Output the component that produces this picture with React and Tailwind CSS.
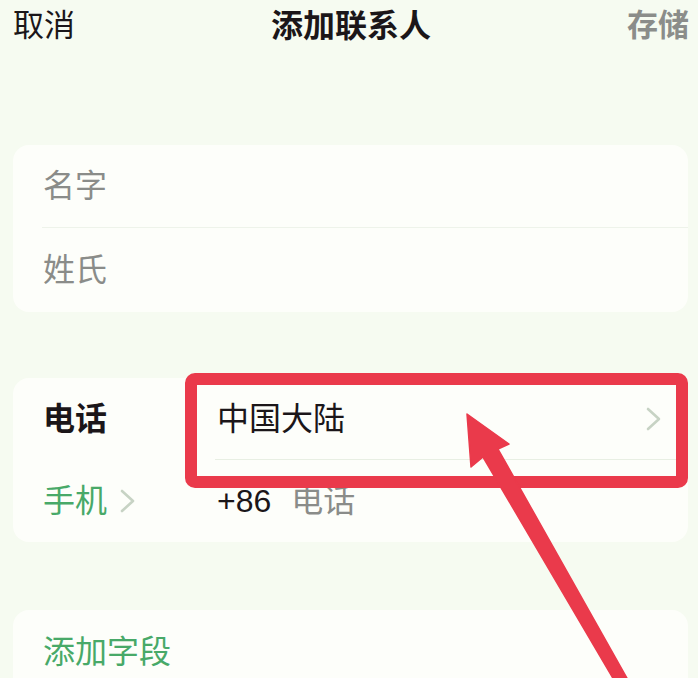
import React from "react";

function Chevron({ className }) {
  return (
    <svg className={className} width="16" height="24" viewBox="0 0 16 24" fill="none">
      <polyline points="2,2 13,12 2,22" stroke="#c7d3c4" strokeWidth="2.6" strokeLinecap="round" strokeLinejoin="round" />
    </svg>
  );
}

export default function App() {
  return (
    <div
      className="relative w-[698px] h-[678px] overflow-hidden bg-[#f6fbf1] text-[#1b1619]"
      style={{ fontFamily: '"Liberation Sans", "Noto Sans CJK SC", sans-serif' }}
    >
      {/* Header */}
      <div className="grid grid-cols-[1fr_auto_1fr] items-center h-[52px] pl-[13px] pr-[9px]">
        <div className="justify-self-start text-[31px] leading-[52px]">取消</div>
        <div className="justify-self-center text-[32px] leading-[52px] font-bold">添加联系人</div>
        <div className="justify-self-end text-[31px] leading-[52px] font-semibold text-[#8b8d8a]">存储</div>
      </div>

      {/* Card 1 */}
      <div className="mt-[93px] ml-[13px] mr-[10px] rounded-[16px] bg-[#fdfefa]">
        <div className="h-[82px] flex items-center pl-[30px] text-[32px] text-[#8a8c89]">名字</div>
        <div className="ml-[29px] h-px bg-[#eef3ea]" />
        <div className="h-[84px] flex items-center pl-[30px] text-[32px] text-[#8a8c89]">姓氏</div>
      </div>

      {/* Card 2 */}
      <div className="mt-[66px] ml-[13px] mr-[10px] rounded-[16px] bg-[#fdfefa]">
        <div className="h-[81px] flex items-center">
          <div className="w-[204px] pl-[30px] text-[32px] font-bold">电话</div>
          <div className="flex-1 flex items-center justify-between pr-[26px]">
            <span className="text-[32px]">中国大陆</span>
            <Chevron />
          </div>
        </div>
        <div className="ml-[202px] h-px bg-[#e8efe3]" />
        <div className="h-[82px] flex items-center">
          <div className="w-[204px] pl-[30px] flex items-center text-[32px] text-[#48a968]">
            <span>手机</span>
            <Chevron className="ml-[13px]" />
          </div>
          <div className="flex items-center text-[32px]">
            <span>+86</span>
            <span className="ml-[20px] text-[#8a8c89]">电话</span>
          </div>
        </div>
      </div>

      {/* Card 3 */}
      <div className="mt-[68px] ml-[13px] mr-[10px] rounded-[16px] bg-[#fdfefa]">
        <div className="h-[84px] flex items-center pl-[30px] text-[32px] text-[#48a968]">添加字段</div>
      </div>

      {/* Annotation: red box */}
      <div className="absolute left-[185px] top-[373px] w-[503px] h-[115px] border-[12px] border-[#ea3a4b] rounded-[10px]" />

      {/* Annotation: arrow */}
      <svg className="absolute left-0 top-0" width="698" height="678" viewBox="0 0 698 678">
        <polygon
          points="467,414 509,444 498,449 628,680 614,680 483,457 471,467"
          fill="#ea3a4b"
          stroke="#ea3a4b"
          strokeWidth="1.5"
          strokeLinejoin="round"
        />
      </svg>
    </div>
  );
}
